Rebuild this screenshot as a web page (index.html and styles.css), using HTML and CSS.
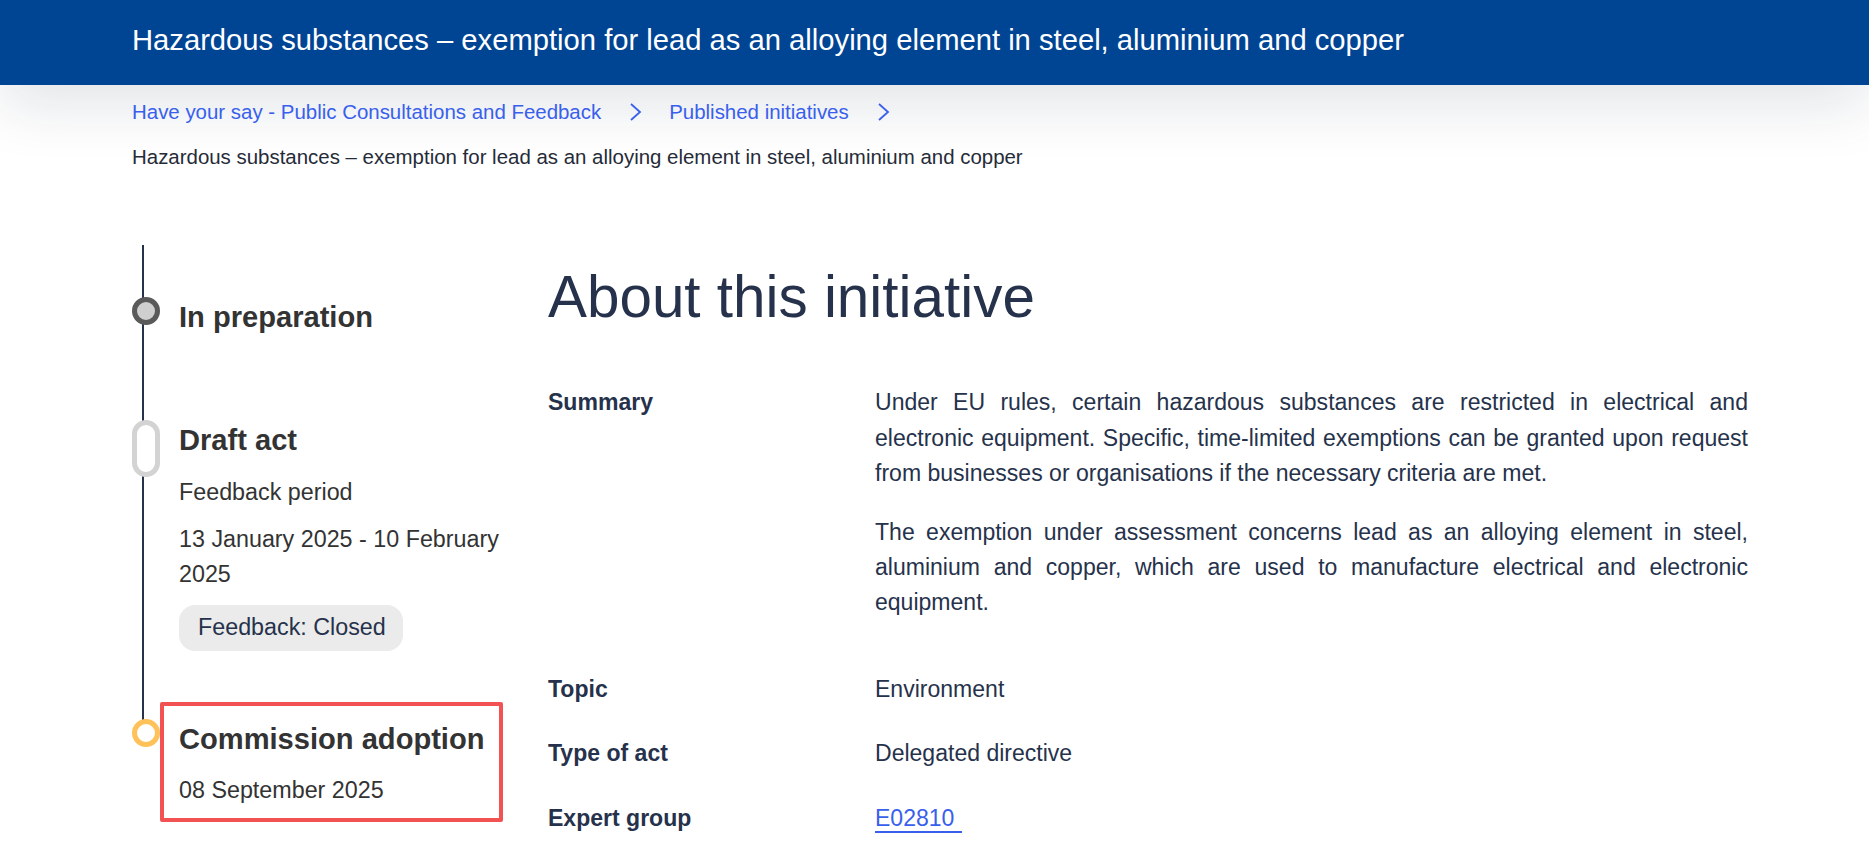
FILE: index.html
```html
<!DOCTYPE html>
<html lang="en">
<head>
<meta charset="utf-8">
<title>Hazardous substances – exemption for lead as an alloying element in steel, aluminium and copper</title>
<link rel="stylesheet" href="styles.css">
</head>
<body>
<header class="page-header">
  <div class="container page-header__inner">
    <h1 class="page-header__title">Hazardous substances – exemption for lead as an alloying element in steel, aluminium and copper</h1>
  </div>
</header>

<nav class="breadcrumb container" aria-label="Breadcrumb">
  <ol class="breadcrumb__list">
    <li class="breadcrumb__item">
      <a class="breadcrumb__link" href="#">Have your say - Public Consultations and Feedback</a>
      <svg class="breadcrumb__icon" viewBox="0 -1 16 18" aria-hidden="true"><path d="M3 0 L12 8 L3 16" /></svg>
    </li>
    <li class="breadcrumb__item">
      <a class="breadcrumb__link" href="#">Published initiatives</a>
      <svg class="breadcrumb__icon" viewBox="0 -1 16 18" aria-hidden="true"><path d="M3 0 L12 8 L3 16" /></svg>
    </li>
    <li class="breadcrumb__item breadcrumb__item--current">Hazardous substances – exemption for lead as an alloying element in steel, aluminium and copper</li>
  </ol>
</nav>

<main class="main container">
  <aside class="timeline">
    <ol class="timeline__list">
      <li class="step step--first">
        <div class="step__body step__body--spaced">
          <span class="step__marker step__marker--done"></span>
          <h3 class="step__title">In preparation</h3>
        </div>
      </li>
      <li class="step">
        <div class="step__body">
          <span class="step__marker step__marker--pill"></span>
          <h3 class="step__title">Draft act</h3>
          <p class="step__text step__text--first">Feedback period</p>
          <p class="step__text step__text--date">13 January 2025 - 10 February 2025</p>
          <span class="badge">Feedback: Closed</span>
        </div>
      </li>
      <li class="step step--last">
        <div class="step__body step__body--highlight">
          <span class="step__marker step__marker--planned"></span>
          <h3 class="step__title">Commission adoption</h3>
          <p class="step__text step__text--first">08 September 2025</p>
        </div>
      </li>
    </ol>
  </aside>

  <section class="about">
    <h2 class="about__title">About this initiative</h2>
    <dl class="details">
      <div class="details__row">
        <dt class="details__label">Summary</dt>
        <dd class="details__value">
          <p class="details__para">Under EU rules, certain hazardous substances are restricted in electrical and electronic equipment. Specific, time-limited exemptions can be granted upon request from businesses or organisations if the necessary criteria are met.</p>
          <p class="details__para">The exemption under assessment concerns lead as an alloying element in steel, aluminium and copper, which are used to manufacture electrical and electronic equipment.</p>
        </dd>
      </div>
      <div class="details__row">
        <dt class="details__label">Topic</dt>
        <dd class="details__value">Environment</dd>
      </div>
      <div class="details__row">
        <dt class="details__label">Type of act</dt>
        <dd class="details__value">Delegated directive</dd>
      </div>
      <div class="details__row">
        <dt class="details__label">Expert group</dt>
        <dd class="details__value"><a class="details__link" href="#">E02810</a></dd>
      </div>
    </dl>
  </section>
</main>
</body>
</html>
```

FILE: styles.css
```css
html, body {
  margin: 0;
  padding: 0;
  background: #ffffff;
}

body {
  font-family: "Liberation Sans", Arial, sans-serif;
  color: #26324b;
}

.container {
  padding-left: 132px;
  padding-right: 121px;
}

/* Header */
.page-header {
  background: #004494;
  height: 85px;
  box-shadow: 0 20px 60px rgba(20, 30, 60, 0.12);
}

.page-header__inner {
  height: 100%;
  display: flex;
  align-items: center;
  padding-bottom: 4px;
  box-sizing: border-box;
}

.page-header__title {
  margin: 0;
  color: #ffffff;
  font-size: 29.2px;
  font-weight: 400;
  line-height: 35px;
}

/* Breadcrumb */
.breadcrumb {
  padding-top: 12px;
}

.breadcrumb__list {
  list-style: none;
  margin: 0;
  padding: 0;
  display: flex;
  flex-wrap: wrap;
  row-gap: 14px;
  font-size: 20.45px;
  line-height: 30.7px;
}

.breadcrumb__item {
  display: flex;
  align-items: center;
}

.breadcrumb__link {
  color: #3860ed;
  text-decoration: none;
}

.breadcrumb__icon {
  width: 16px;
  height: 18px;
  margin: 0 25px 0 27px;
  fill: none;
  stroke: #3860ed;
  stroke-width: 1.8;
}

.breadcrumb__item--current {
  color: #262b38;
}

/* Main */
.main {
  display: flex;
  padding-top: 72.6px;
}

/* Timeline */
.timeline {
  width: 416px;
  flex: none;
}

.timeline__list {
  list-style: none;
  margin: 0;
  padding: 0;
}

.step {
  position: relative;
  padding-left: 47px;
  padding-top: 70px;
}

.step::before {
  content: "";
  position: absolute;
  left: 10px;
  top: 0;
  bottom: 0;
  width: 2px;
  background: #26324b;
}

.step--first {
  padding-top: 54px;
}

.step--last {
  padding-top: 70px;
}

.step--last::before {
  bottom: auto;
  height: 71px;
}

.step__body {
  position: relative;
}

.step__body--spaced {
  padding-bottom: 17px;
}

.step__marker {
  position: absolute;
  left: -47px;
  top: -2px;
  width: 28px;
  height: 28px;
  box-sizing: border-box;
  border: 5px solid #5a5a5a;
  border-radius: 50%;
  background: #ffffff;
  z-index: 1;
}

.step__marker--done {
  border-color: #5a5a5a;
  background: #cfcfcf;
}

.step__marker--pill {
  height: 57px;
  border-radius: 14px;
  border-color: #d3d3d3;
}

.step__marker--planned {
  border-color: #ffc15a;
}

.step__title {
  margin: 0;
  font-size: 29.1px;
  line-height: 36px;
  font-weight: 700;
  color: #333333;
}

.step__text {
  margin: 0;
  font-size: 23.3px;
  line-height: 35.3px;
  color: #333333;
}

.step__text--first {
  margin-top: 16.5px;
}

.step__text--date {
  margin-top: 12px;
}

.badge {
  display: inline-block;
  margin-top: 12.5px;
  padding: 5.5px 17px 5.5px 19px;
  border-radius: 16px;
  background: #ebebeb;
  color: #26324b;
  font-size: 23.3px;
  line-height: 35px;
}

.step__body--highlight::after {
  content: "";
  position: absolute;
  left: -19px;
  top: -19px;
  width: 343px;
  height: 120px;
  box-sizing: border-box;
  border: 4px solid #f25252;
  border-radius: 2px;
  pointer-events: none;
}

/* About */
.about {
  flex: 1;
  min-width: 0;
}

.about__title {
  margin: 17px 0 0;
  font-size: 58.4px;
  line-height: 70px;
  font-weight: 400;
  color: #26324b;
}

.details {
  margin: 53.4px 0 0;
  display: flex;
  flex-direction: column;
  gap: 29.5px;
}

.details__row {
  display: grid;
  grid-template-columns: 327px 1fr;
}

.details__label {
  font-size: 23.04px;
  line-height: 35px;
  font-weight: 700;
  color: #26324b;
}

.details__value {
  margin: 0;
  font-size: 23.04px;
  line-height: 35.2px;
  color: #26324b;
}

.details__para {
  margin: 0 0 24px;
  text-align: justify;
}

.details__para:last-child {
  margin-bottom: 21.4px;
}

.details__link {
  color: #3860ed;
  text-decoration: none;
  border-bottom: 2px solid #3860ed;
  padding-right: 8px;
}
```
